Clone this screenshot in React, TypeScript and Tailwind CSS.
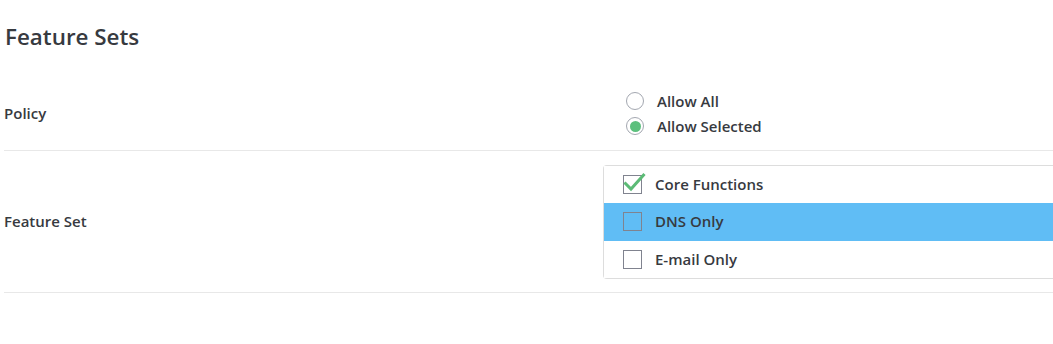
import { useState } from 'react';

const features = ['Core Functions', 'DNS Only', 'E-mail Only'];

function Radio({ checked }: { checked: boolean }) {
  return (
    <span className="relative flex h-[18px] w-[18px] items-center justify-center rounded-full border-[1.5px] border-[#a3a7b0] bg-white">
      {checked && <span className="h-[11px] w-[11px] rounded-full bg-[#5cc07d]" />}
    </span>
  );
}

function Checkbox({ checked }: { checked: boolean }) {
  return (
    <span className="relative block h-[19px] w-[19px] border-[1.5px] border-[#80838f]">
      {checked && (
        <svg className="absolute -left-[1px] -top-[4px]" width="24" height="21" viewBox="0 0 24 21">
          <path d="M2.5 11.5 L8 17 L20.5 3" fill="none" stroke="#5cbb76" strokeWidth="3" strokeLinecap="square" />
        </svg>
      )}
    </span>
  );
}

export default function App() {
  const [policy, setPolicy] = useState('selected');
  const [checked, setChecked] = useState<string[]>(['Core Functions']);
  const hovered = 'DNS Only';

  const toggle = (f: string) =>
    setChecked(c => (c.includes(f) ? c.filter(x => x !== f) : [...c, f]));

  return (
    <div className="h-[344px] w-full overflow-hidden bg-white text-[#373a3f] font-['Open_Sans',sans-serif]">
      <div className="pl-[4px]">
        <h1 className="pt-[22px] pl-[1px] text-[22.4px] font-semibold leading-[30px]">Feature Sets</h1>

        {/* Policy */}
        <div className="mt-[25px] flex h-[74px] items-center border-b border-[#e8e8e8]">
          <div className="w-[599px] text-[15px] font-semibold">Policy</div>
          <div className="flex flex-col pl-[23px]">
            {[
              ['all', 'Allow All'],
              ['selected', 'Allow Selected'],
            ].map(([k, label]) => (
              <label key={k} className="flex h-[25px] cursor-pointer items-center gap-[13px] text-[15px] font-semibold" onClick={() => setPolicy(k)}>
                <Radio checked={policy === k} />
                {label}
              </label>
            ))}
          </div>
        </div>

        {/* Feature set */}
        <div className="flex h-[142px] items-center border-b border-[#e8e8e8]">
          <div className="w-[599px] text-[15px] font-semibold">Feature Set</div>
          <div className="-mr-[20px] flex-1 rounded-l-[4px] border border-r-0 border-[#dddddd]">
            {features.map(f => (
              <div
                key={f}
                onClick={() => toggle(f)}
                className={`flex cursor-pointer items-center gap-[13px] pl-[19px] text-[15px] font-semibold ${
                  f === hovered ? 'h-[38px] bg-[#60bdf5]' : 'h-[37px] bg-white'
                }`}
              >
                <Checkbox checked={checked.includes(f)} />
                {f}
              </div>
            ))}
          </div>
        </div>
      </div>
    </div>
  );
}
